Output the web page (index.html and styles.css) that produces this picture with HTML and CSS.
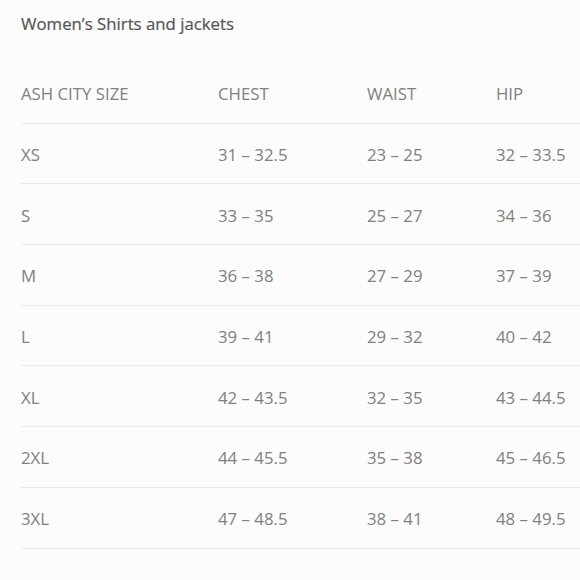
FILE: index.html
```html
<!DOCTYPE html>
<html>
<head>
<meta charset="utf-8">
<link rel="stylesheet" href="styles.css">
</head>
<body>
<div class="page">
  <h1 class="title">Women’s Shirts and jackets</h1>
  <div class="table">
    <div class="row head"><span>ASH CITY SIZE</span><span>CHEST</span><span>WAIST</span><span>HIP</span></div>
    <div class="row"><span>XS</span><span>31 – 32.5</span><span>23 – 25</span><span>32 – 33.5</span></div>
    <div class="row"><span>S</span><span>33 – 35</span><span>25 – 27</span><span>34 – 36</span></div>
    <div class="row"><span>M</span><span>36 – 38</span><span>27 – 29</span><span>37 – 39</span></div>
    <div class="row"><span>L</span><span>39 – 41</span><span>29 – 32</span><span>40 – 42</span></div>
    <div class="row"><span>XL</span><span>42 – 43.5</span><span>32 – 35</span><span>43 – 44.5</span></div>
    <div class="row"><span>2XL</span><span>44 – 45.5</span><span>35 – 38</span><span>45 – 46.5</span></div>
    <div class="row"><span>3XL</span><span>47 – 48.5</span><span>38 – 41</span><span>48 – 49.5</span></div>
  </div>
</div>
</body>
</html>
```
FILE: styles.css
```css
html, body {
  margin: 0;
  padding: 0;
  background: #fcfcfc;
}
.page {
  padding: 12px 0 0 21px;
  font-family: "Open Sans", sans-serif;
  color: #808080;
}
.title {
  margin: 0;
  font-size: 16.8px;
  font-weight: 400;
  line-height: 24px;
  color: #555;
  -webkit-text-stroke: 0.2px #555;
}
.table {
  margin-top: 27px;
}
.row {
  display: grid;
  grid-template-columns: 197px 149px 129px 1fr;
  align-items: center;
  height: 59.7px;
  border-bottom: 1px solid #eaeaea;
  font-size: 16.8px;
}
.row span {
  padding-top: 2px;
}
```
